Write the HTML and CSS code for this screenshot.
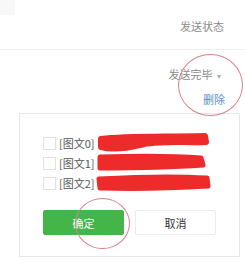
FILE: index.html
```html
<!DOCTYPE html>
<html lang="zh-CN">
<head>
  <meta charset="UTF-8">
  <title>发送状态</title>
  <link rel="stylesheet" href="styles.css">
</head>
<body>
  <div class="head">
    <div class="corner"></div>
    <div class="head-title">发送状态</div>
  </div>

  <div class="status">
    <div class="status-sel">发送完毕 <span class="arrow">▾</span></div>
    <a class="del">删除</a>
  </div>

  <div class="dialog">
    <div class="row">
      <span class="box"></span>
      <span class="label">[图文0]</span>
      <svg class="scribble" width="118" height="22" viewBox="0 0 118 22">
        <path d="M6 7 C30 4 60 5 110 4 L111 10 C85 11 65 8 45 13 C28 17 14 17 6 15 Z" fill="#ee2b2b" stroke="#ee2b2b" stroke-width="6" stroke-linejoin="round"/>
      </svg>
    </div>
    <div class="row">
      <span class="box"></span>
      <span class="label">[图文1]</span>
      <svg class="scribble" width="118" height="22" viewBox="0 0 118 22">
        <path d="M5 5 C40 4 80 4 106 6 L108 13 C80 15 40 16 5 16 Z" fill="#ee2b2b" stroke="#ee2b2b" stroke-width="5" stroke-linejoin="round"/>
      </svg>
    </div>
    <div class="row">
      <span class="box"></span>
      <span class="label">[图文2]</span>
      <svg class="scribble" width="120" height="22" viewBox="0 0 120 22">
        <path d="M4 7 C40 5 80 4 112 6 L113 14 C80 16 40 17 5 16 Z" fill="#ee2b2b" stroke="#ee2b2b" stroke-width="5" stroke-linejoin="round"/>
      </svg>
    </div>

    <div class="actions">
      <button class="btn btn-ok">确定</button>
      <button class="btn btn-cancel">取消</button>
    </div>
  </div>

  <!-- hand-drawn annotation circles -->
  <div class="ring ring-del"></div>
  <div class="ring ring-ok"></div>
</body>
</html>
```

FILE: styles.css
```css
body {
  margin: 0;
  position: relative;
  background: #fff;
  color: #333;
  font-family: "Noto Sans CJK SC", "Noto Sans", sans-serif;
  font-size: 11px;
  line-height: 12px;
}

.head {
  height: 49px;
  border-bottom: 1px solid #eeeeee;
  display: flex;
  justify-content: space-between;
  padding-right: 21px;
}

.corner {
  width: 15px;
  height: 15px;
  background: #f8f8f8;
}

.head-title {
  margin-top: 20px;
  color: #8a8a8a;
}

.status {
  display: flex;
  flex-direction: column;
  align-items: flex-end;
  height: 63px;
}

.status-sel {
  margin-top: 18px;
  margin-right: 24px;
  color: #8a8a8a;
}

.arrow {
  font-size: 8px;
  color: #aaa;
  margin-left: 2px;
}

.del {
  margin-top: 11px;
  margin-right: 20px;
  color: #5d8ec9;
}

.dialog {
  margin: 0 5px 0 19px;
  border: 1px solid #e6e6e6;
  padding: 19px 0 0 23px;
  box-sizing: border-box;
  height: 144px;
}

.row {
  height: 20px;
  display: flex;
  align-items: center;
}

.box {
  width: 11px;
  height: 11px;
  border: 1px solid #e2e2e2;
  margin-right: 3px;
}

.label {
  color: #555;
}

.scribble {
  margin: -6px 0 -6px 0;
}

.actions {
  display: flex;
  gap: 11px;
  margin-top: 17px;
}

.btn {
  width: 81px;
  height: 25px;
  border-radius: 2px;
  font-family: inherit;
  font-size: 11px;
  padding: 0;
}

.btn-ok {
  background: #44b549;
  border: 1px solid #44b549;
  color: #fff;
}

.btn-cancel {
  background: #fff;
  border: 1px solid #ececec;
  color: #333;
}

.ring {
  position: absolute;
  border: 1px solid #d98088;
  border-radius: 50%;
}

.ring-del {
  left: 178px;
  top: 54px;
  width: 63px;
  height: 60px;
}

.ring-ok {
  left: 75px;
  top: 198px;
  width: 53px;
  height: 49px;
}
```
